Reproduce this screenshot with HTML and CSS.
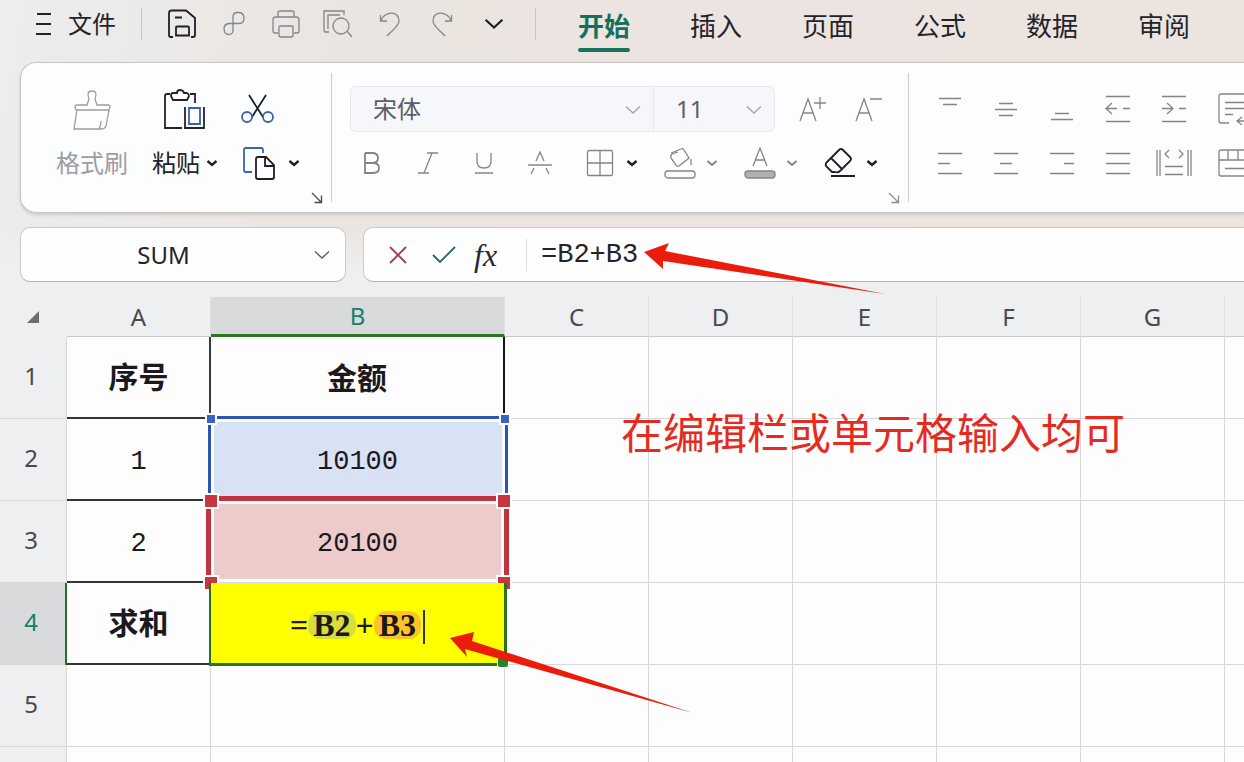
FILE: index.html
```html
<!DOCTYPE html>
<html lang="zh-CN">
<head>
<meta charset="UTF-8">
<meta name="viewport" content="width=device-width, initial-scale=1">
<title>表格求和</title>
<link rel="stylesheet" href="styles.css">
</head>
<body>

<svg class="defs" aria-hidden="true">
  <symbol id="chev" viewBox="0 0 12 8"><path d="M1.5 2 6 6 10.5 2"/></symbol>
  <symbol id="chev-wide" viewBox="0 0 16 10"><path d="M1 1.5 8 8 15 1.5"/></symbol>
  <symbol id="launcher" viewBox="0 0 12 12"><path d="M1 1 10 10M10.500 3.500V10.500H3.500"/></symbol>
</svg>

<header class="menubar">
  <button class="file-button">
    <svg width="16" height="24" viewBox="0 0 16 24"><path d="M1 2H15M0 12H15M0 22H15"/></svg>
    文件
  </button>
  <span class="bar-sep"></span>
  <div class="quick">
    <button class="tool strong" aria-label="保存">
      <svg width="28" height="30" viewBox="0 0 28 30"><path d="M5 28H3Q1 28 1 26V4Q1 1.500 3.500 1.500H18L27 9V26Q27 28 25 28H23M7 8.500H14M9 17.500H20Q21 17.500 21 18.500V26.500H8V18.500Q8 17.500 9 17.500Z"/></svg>
    </button>
    <button class="tool" aria-label="输出">
      <svg width="28" height="30" viewBox="0 0 28 30"><path d="M13 22V8Q13 3.500 17.500 3.500H19Q24 4 24 9 24 14.500 19 14.500H9Q4 15 4 20 4.500 25.500 8.500 25.500 12.500 25.500 13 22"/></svg>
    </button>
    <button class="tool" aria-label="打印">
      <svg width="28" height="30" viewBox="0 0 28 30"><path d="M6 24H3Q1 24 1 22V11Q1 8 4 8H24Q27 8 27 11V22Q27 24 25 24H22M6 8V4Q6 2 8 2H20Q22 2 22 4V8M8 17H20Q21 17 21 18V26Q21 28 19 28H9Q7 28 7 26V18Q7 17 8 17Z"/></svg>
    </button>
    <button class="tool" aria-label="打印预览">
      <svg width="30" height="30" viewBox="0 0 30 30"><path d="M6 23H2Q1 23 1 21V2H21V6M5 20V6H17M24 22 29 28"/><circle cx="18" cy="17" r="8"/></svg>
    </button>
    <button class="tool" aria-label="撤消">
      <svg width="28" height="30" viewBox="0 0 28 30"><path d="M4.500 6V12H11M4.500 12C9 2 23 1 23 12 22.500 18 16 21 11 27"/></svg>
    </button>
    <button class="tool" aria-label="恢复">
      <svg width="28" height="30" viewBox="0 0 28 30"><path d="M23.500 6V12H17M23.500 12C19 2 5 1 5 12 5.500 18 12 21 17 27"/></svg>
    </button>
    <button class="tool strong" aria-label="更多"><svg width="20" height="12"><use href="#chev-wide"/></svg></button>
  </div>
  <span class="bar-sep"></span>
  <nav class="tabs">
    <button class="tab active">开始</button>
    <button class="tab">插入</button>
    <button class="tab">页面</button>
    <button class="tab">公式</button>
    <button class="tab">数据</button>
    <button class="tab">审阅</button>
  </nav>
</header>

<section class="ribbon">
  <div class="group clipboard">
    <button class="big-tool painter">
      <svg width="40" height="44" viewBox="0 0 40 44"><path d="M15 18 17 12Q14 4 20 4T23 12L25 18H36Q38 18 38 20L37 23H4L3 20Q3 18 5 18ZM5 23 2 42H29Q33 42 34 39L37 23M27 42Q29 38 29 34"/></svg>
      <span>格式刷</span>
    </button>
    <button class="big-tool paste">
      <svg width="44" height="44" viewBox="0 0 44 44"><path d="M7 7H4Q2 7 2 9V41H19M27 7H32V16M10 6H14Q14 3 17 3T21 6H24Q26 7 26 9L24 13H10L8 9Q8 6 10 6ZM22 20V41H41V20"/><path class="blue" d="M26 21H37V37H26Z"/></svg>
      <span>粘贴 <svg class="bold-chev" width="12" height="8"><use href="#chev"/></svg></span>
    </button>
    <div class="rows">
      <div class="row">
        <button class="tool strong" aria-label="剪切">
          <svg width="34" height="32" viewBox="0 0 34 32"><path d="M8 2 22 24M25 2 11 24"/><g class="blue"><circle cx="6" cy="24" r="5"/><circle cx="27" cy="24" r="5"/></g></svg>
        </button>
      </div>
      <div class="row">
        <button class="tool strong" aria-label="复制">
          <svg width="34" height="36" viewBox="0 0 34 36"><path class="blue" d="M11 27H5Q3 27 3 25V5Q3 3 5 3H20Q22 3 22 5V8"/><path d="M17 12H25L33 20V32Q33 34 31 34H17Q15 34 15 32V14Q15 12 17 12ZM24 12V21H33"/></svg>
        </button>
        <button class="drop strong" aria-label="复制选项"><svg width="12" height="8"><use href="#chev"/></svg></button>
      </div>
    </div>
    <button class="launcher strong" aria-label="剪贴板设置"><svg width="12" height="12"><use href="#launcher"/></svg></button>
  </div>

  <div class="group font">
    <div class="row">
      <div class="combo">
        <label class="pick family"><select aria-label="字体"><option>宋体</option></select><svg width="16" height="10"><use href="#chev-wide"/></svg></label>
        <label class="pick size"><select aria-label="字号"><option>11</option></select><svg width="16" height="10"><use href="#chev-wide"/></svg></label>
      </div>
      <button class="tool" aria-label="增大字号"><svg width="32" height="28" viewBox="0 0 32 28"><path d="M3 26 11 4 19 26M6 18H16M17 8H29M23 2V14"/></svg></button>
      <button class="tool" aria-label="减小字号"><svg width="32" height="28" viewBox="0 0 32 28"><path d="M3 26 11 4 19 26M6 18H16M17 4H29"/></svg></button>
    </div>
    <div class="row styles">
      <button class="tool" aria-label="加粗"><svg class="thick" width="20" height="24" viewBox="0 0 20 24"><path d="M3 2H10Q16 2 16 7T10 12H3M3 2V22H11Q17 22 17 17T11 12"/></svg></button>
      <button class="tool" aria-label="倾斜"><svg width="22" height="24" viewBox="0 0 22 24"><path d="M10 2H21M1 22H12M15 2 7 22"/></svg></button>
      <button class="tool" aria-label="下划线"><svg width="20" height="24" viewBox="0 0 20 24"><path d="M3 2V10Q3 17 10 17T17 10V2M1 22H19"/></svg></button>
      <button class="tool" aria-label="删除线"><svg width="26" height="24" viewBox="0 0 26 24"><path d="M9 10 13 1 17 10M1 14H25M7 17 4 23M19 17 22 23"/></svg></button>
      <div class="pairs">
        <div class="pair">
          <button class="tool" aria-label="边框"><svg width="28" height="28" viewBox="0 0 28 28"><path d="M3 1.500H25Q26.500 1.500 26.500 3V25Q26.500 26.500 25 26.500H3Q1.500 26.500 1.500 25V3Q1.500 1.500 3 1.500ZM14 2V26M2 14H26"/></svg></button>
          <button class="drop strong" aria-label="边框选项"><svg width="12" height="8"><use href="#chev"/></svg></button>
        </div>
        <div class="pair">
          <button class="tool" aria-label="填充颜色"><svg width="32" height="34" viewBox="0 0 32 34"><path d="M7 7 17 3Q19 2 20 4L25 12 15 20Q13 21 12 19L7 12Q6 10 8 8L14 6M27 13V19"/><rect x="1" y="25" width="30" height="7" rx="3"/></svg></button>
          <button class="drop" aria-label="填充选项"><svg width="12" height="8"><use href="#chev"/></svg></button>
        </div>
        <div class="pair">
          <button class="tool" aria-label="字体颜色"><svg width="32" height="34" viewBox="0 0 32 34"><path d="M9 20 16 2 23 20M11 14H21"/><rect class="swatch" x="1" y="25" width="30" height="7" rx="3"/></svg></button>
          <button class="drop" aria-label="字体颜色选项"><svg width="12" height="8"><use href="#chev"/></svg></button>
        </div>
        <div class="pair">
          <button class="tool strong" aria-label="清除"><svg width="32" height="32" viewBox="0 0 32 32"><path d="M3 15 15 3Q17 1 19 3L26 10Q28 12 26 14L16 24Q14 26 11 25H8L2 19Q1 17 3 15ZM7 11 18 22M7 29H31"/></svg></button>
          <button class="drop strong" aria-label="清除选项"><svg width="12" height="8"><use href="#chev"/></svg></button>
        </div>
      </div>
    </div>
    <button class="launcher" aria-label="字体设置"><svg width="12" height="12"><use href="#launcher"/></svg></button>
  </div>

  <div class="group align">
    <div class="row">
      <button class="tool" aria-label="顶端对齐"><svg width="24" height="28" viewBox="0 0 24 28"><path d="M1 3.500H23M5 9.500H19"/></svg></button>
      <button class="tool" aria-label="垂直居中"><svg width="24" height="28" viewBox="0 0 24 28"><path d="M5 8.500H19M1 14.500H23M5 20.500H19"/></svg></button>
      <button class="tool" aria-label="底端对齐"><svg width="24" height="28" viewBox="0 0 24 28"><path d="M5 18.500H19M1 24.500H23"/></svg></button>
      <button class="tool" aria-label="减少缩进"><svg width="26" height="28" viewBox="0 0 26 28"><path d="M1 1.500H25M1 26.500H25M7 8 1 13.500 7 19M1 13.500H12M18 13.500H25"/></svg></button>
      <button class="tool" aria-label="增加缩进"><svg width="26" height="28" viewBox="0 0 26 28"><path d="M1 1.500H25M1 26.500H25M6 8 12 13.500 6 19M1 13.500H12M18 13.500H25"/></svg></button>
      <button class="tool" aria-label="自动换行"><svg width="32" height="32" viewBox="0 0 32 32"><path d="M15 30H7Q5 30 5 28V3Q5 1 7 1H32M11 9.500H32M11 15.500H32M11 21.500H19M28 24 23 28 28 32M23 28H32"/></svg></button>
    </div>
    <div class="row">
      <button class="tool" aria-label="左对齐"><svg width="26" height="24" viewBox="0 0 26 24"><path d="M1 2.500H25M1 12.500H13M1 22.500H25"/></svg></button>
      <button class="tool" aria-label="居中"><svg width="26" height="24" viewBox="0 0 26 24"><path d="M1 2.500H25M7 12.500H19M1 22.500H25"/></svg></button>
      <button class="tool" aria-label="右对齐"><svg width="26" height="24" viewBox="0 0 26 24"><path d="M1 2.500H25M15 12.500H25M1 22.500H25"/></svg></button>
      <button class="tool" aria-label="两端对齐"><svg width="26" height="24" viewBox="0 0 26 24"><path d="M1 2.500H25M1 12.500H25M1 22.500H25"/></svg></button>
      <button class="tool" aria-label="分散对齐"><svg width="36" height="28" viewBox="0 0 36 28"><path d="M1 1V27M4 1V27M32 1V27M35 1V27M13 1 9 5 13 9M23 1 27 5 23 9M9 17.500H27M9 25.500H27"/></svg></button>
      <button class="tool" aria-label="合并居中"><svg width="32" height="30" viewBox="0 0 32 30"><path d="M32 28H7Q5 28 5 26V4Q5 2 7 2H32M5 12H32M14 2V12M24 2V12M11 20.500H32"/></svg></button>
    </div>
  </div>
</section>

<section class="formula-row">
  <div class="name-box">
    <input type="text" value="SUM" aria-label="名称框">
    <button class="tool" aria-label="名称列表"><svg width="16" height="10"><use href="#chev-wide"/></svg></button>
  </div>
  <div class="formula-bar">
    <button class="tool cancel" aria-label="取消"><svg width="20" height="20" viewBox="0 0 20 20"><path d="M2 2 18 18M18 2 2 18"/></svg></button>
    <button class="tool accept" aria-label="输入"><svg width="24" height="20" viewBox="0 0 24 20"><path d="M1 10 8 17 23 2"/></svg></button>
    <button class="tool fx" aria-label="插入函数"><i>fx</i></button>
    <span class="bar-sep"></span>
    <input type="text" value="=B2+B3" aria-label="编辑栏">
  </div>
</section>

<main class="sheet">
  <table>
    <colgroup>
      <col class="col-head"><col><col class="col-b"><col><col><col><col><col><col>
    </colgroup>
    <thead>
      <tr>
        <th><svg width="14" height="14" viewBox="0 0 14 14"><path class="corner" d="M13 1V13H1Z"/></svg></th>
        <th>A</th><th class="current">B</th><th>C</th><th>D</th><th>E</th><th>F</th><th>G</th><th></th>
      </tr>
    </thead>
    <tbody>
      <tr><th>1</th><td class="ruled title">序号</td><td class="title top-edge">金额</td><td></td><td></td><td></td><td></td><td></td><td></td></tr>
      <tr>
        <th>2</th><td class="ruled">1</td>
        <td class="marked">10100<span class="range blue-range"><i></i><i></i></span></td>
        <td></td><td></td><td></td><td></td><td></td><td></td>
      </tr>
      <tr>
        <th>3</th><td class="ruled">2</td>
        <td class="marked">20100<span class="range red-range"><i></i><i></i><i></i><i></i></span></td>
        <td></td><td></td><td></td><td></td><td></td><td></td>
      </tr>
      <tr>
        <th class="current">4</th><td class="ruled title total">求和</td>
        <td class="marked editing">=<mark>B2</mark>+<mark class="second">B3</mark><span class="caret"></span><span class="fill-area"></span></td>
        <td></td><td></td><td></td><td></td><td></td><td></td>
      </tr>
      <tr><th>5</th><td></td><td></td><td></td><td></td><td></td><td></td><td></td><td></td></tr>
      <tr><th></th><td></td><td></td><td></td><td></td><td></td><td></td><td></td><td></td></tr>
    </tbody>
  </table>
  <p class="note">在编辑栏或单元格输入均可</p>
  <svg class="arrow to-bar" width="242" height="52" viewBox="0 0 242 52"><path d="M0 9 25 0 21 8 241 51 19 18 19 26Z"/></svg>
  <svg class="arrow to-cell" width="244" height="82" viewBox="0 0 244 82"><path d="M0 6 24 0 22 9 243 81 15 17 17 25Z"/></svg>
</main>

</body>
</html>
```
FILE: styles.css
```css
* {box-sizing: border-box;}
html, body {margin: 0; height: 100%; overflow: hidden;}
body {
  display: flex; flex-direction: column;
  font: 24px/1 "Noto Sans", "Noto Sans CJK SC", sans-serif; color: #25232a;
  background: linear-gradient(100deg, #ecedef 0, #ebe5e1 340px, #ebe4df 100%);
}
button, input, select {
  font: inherit; color: inherit; margin: 0; padding: 0; border: 0; background: none;
}
button {cursor: pointer;}
svg {fill: none; stroke: currentColor; stroke-width: 1.3; display: block; flex: none;}
.defs {position: absolute; width: 0; height: 0;}
.blue {stroke: #3c62ac;}

/* menu bar */
.menubar {display: flex; align-items: center; height: 62px; flex: none; padding: 0 0 14px 36px;}
.file-button {display: flex; align-items: center; gap: 16px; white-space: nowrap;}
.file-button svg {stroke-width: 2;}
.bar-sep {width: 1px; height: 32px; background: #c9c5c4; flex: none;}
.file-button + .bar-sep {margin: 0 26px 0 25px;}
.quick {display: flex; gap: 24px; margin-right: 27px;}
.quick .tool {width: 28px; height: 32px;}
.tabs {display: flex; gap: 60px; margin-left: 42px; font-size: 26px;}
.tab {position: relative; height: 48px; padding-top: 4px; white-space: nowrap;}
.tab.active {color: #13705a; font-weight: bold;}
.tab.active::after {
  content: ""; position: absolute; left: 0; right: 0; bottom: -4px;
  height: 4px; border-radius: 2px; background: #17735a;
}

.tool, .drop {
  display: flex; align-items: center; justify-content: center;
  width: 32px; height: 46px; flex: none; color: #84848a;
}
.strong {color: #1f1e27;}
.strong svg {stroke-width: 1.8;}
.drop svg, .bold-chev {stroke-width: 2;}
.drop.strong svg {stroke-width: 2.4;}

/* ribbon */
.ribbon {
  display: flex; flex: none; height: 151px; margin-left: 20px; overflow: hidden;
  background: #fcfdfe; border: 1px solid #c9c5c3; border-right: 0;
  border-radius: 16px 0 0 16px; box-shadow: 0 2px 3px #cfcac8;
}
.group {
  position: relative; flex: none; display: flex; flex-direction: column; gap: 8px;
  margin: 10px 0; padding-top: 13px; border-right: 1px solid #cbccd0;
}
.clipboard {flex-direction: row; gap: 24px; padding-left: 35px; padding-right: 21px;}
.font {padding-left: 18px; padding-right: 20px;}
.align {border: 0; padding-left: 25px;}
.row, .pair {display: flex;}
.rows {display: flex; flex-direction: column; gap: 8px;}
.clipboard .row {gap: 4px;}
.big-tool {
  display: grid; grid-template-rows: 46px 46px; row-gap: 8px;
  place-items: center; align-content: start; white-space: nowrap;
}
.painter {width: 72px; color: #9c9ca2;}
.paste svg {stroke-width: 1.8;}
.paste span {display: flex; align-items: center; gap: 6px;}
.paste .bold-chev {stroke-width: 2.4;}
.launcher {position: absolute; right: 8px; bottom: -2px; color: #8d8d94;}
.launcher.strong {color: #4a4850;}
.launcher svg {stroke-width: 1.3;}

.combo {
  display: flex; width: 425px; height: 46px; margin-right: 22px;
  background: #f6f7fa; border: 1px solid #e6e8ec; border-radius: 6px;
}
.pick {position: relative; color: #5f5d66;}
.pick.family {flex: 1; border-right: 1px solid #e6e8ec;}
.pick.size {width: 120px;}
.pick select {appearance: none; width: 100%; height: 100%; padding-left: 22px; outline: 0;}
.pick svg {position: absolute; right: 12px; top: 18px; color: #a5a6ac; pointer-events: none;}
.font .row > .tool + .tool {margin-left: 24px;}
.styles {padding-left: 6px;}
.thick {stroke-width: 1.8;}
.pairs {display: flex; gap: 16px; margin-left: 28px;}
.swatch {fill: #b0b0b3;}
.align .row {gap: 24px;}

/* name box and formula bar */
.formula-row {display: flex; gap: 17px; flex: none; height: 84px; padding: 14px 0 15px 20px;
  background: linear-gradient(transparent 14px, #eeeff1 60px);}
.name-box, .formula-bar {
  display: flex; align-items: center; background: #fefefe;
  border: 1px solid #c9cacc; border-bottom-color: #b2b3b6; border-radius: 10px;
}
.name-box {width: 326px; padding-right: 7px;}
.name-box input {flex: 1; min-width: 0; text-align: center;}
.name-box .tool {color: #55545b;}
.formula-bar {flex: 1; border-right: 0; border-radius: 10px 0 0 10px; padding-left: 18px; gap: 14px;}
.formula-bar input {
  flex: 1; min-width: 0; height: 40px; outline: 0;
  font-family: "Liberation Mono", monospace; font-size: 27px;
}
.formula-bar svg {stroke-width: 1.8;}
.formula-bar .bar-sep {margin-left: 6px; background: #dcdde0;}
.cancel {color: #a53a50;}
.accept {color: #1e6c66;}
.formula-bar .fx {
  justify-content: flex-start; color: #2a2730;
  font-family: "Liberation Serif", serif; font-size: 32px;
}

/* sheet */
.sheet {position: relative; flex: 1; min-height: 0; background: #fdfdfe;}
table {table-layout: fixed; width: 1369px; border-collapse: separate; border-spacing: 0;}
col {width: 144px;}
.col-head {width: 67px;}
.col-b {width: 294px;}
th, td {
  height: 82px; padding: 0; text-align: center; vertical-align: middle;
  border: 0 solid #d6d8db; border-right-width: 1px; border-bottom-width: 1px;
}
th {background: #eeeff1; font-weight: normal; color: #49474f;}
thead th {height: 40px; border-bottom-color: #c9cbce; border-right-color: #dfe0e2;}
thead th:first-child {border-color: transparent;}
th.current {background: #d9dadc; color: #15806b;}
thead .current {border-bottom: 3px solid #2d7524;}
tbody th {padding: 0 4px 4px 0;}
th svg {margin: 0 0 0 26px;}
.corner {fill: #6d6c72; stroke: none;}
td {
  padding-top: 6px; font-size: 27px; color: #1c191d;
  font-family: "Liberation Mono", "Noto Sans CJK SC", monospace;
}
.title {font-size: 30px; font-weight: bold;}
.ruled {border-bottom: 2px solid #343137;}
.top-edge {border-right: 2px solid #161616; box-shadow: -2px 0 0 #3b3739;}
.total {box-shadow: -2px 0 0 #28702a;}
.marked {position: relative; isolation: isolate;}
.range {
  position: absolute; z-index: -1; top: -3px; right: -4px; bottom: 0; left: -3px;
  border: 3px solid #2c55b0; border-bottom: 0; background: #d9e1f5;
  box-shadow: inset 0 0 0 3px #fbfcfe;
}
.range i {
  position: absolute; top: -6px; left: -6px; width: 12px; height: 12px;
  background: #3a62c5; border: 2px solid #fff;
}
.range i:nth-child(even) {left: auto; right: -6px;}
.red-range {
  top: -5px; right: -5px; left: -5px; border-width: 5px; border-color: #bf353f;
  background: #eecbcb;
}
.red-range i {top: -8px; left: -8px; width: 16px; height: 16px; background: #c93640;}
.red-range i:nth-child(even) {right: -8px;}
.red-range i:nth-child(n+3) {top: auto; bottom: -9px;}
.editing {font-family: "Liberation Serif", serif; font-size: 32px; font-weight: bold;}
.editing mark {
  display: inline-block; padding: 0 5px; line-height: 28px;
  color: inherit; background: #d5de3c; border-radius: 12px;
}
.editing mark.second {background: #fcc428;}
.caret {display: inline-block; width: 2px; height: 34px; margin-left: 2px; vertical-align: -8px; background: #333;}
.fill-area {
  position: absolute; z-index: -1; top: 0; right: -3px; bottom: -2px; left: -2px;
  background: #ff0; border: 3px solid #26741d; border-top: 0; border-left-width: 2px;
}
.fill-area::after {
  content: ""; position: absolute; right: -5px; bottom: -5px; width: 10px; height: 10px;
  background: #26832b; border: 1px solid #fff; border-radius: 3px;
}

/* notes over the sheet */
.note {
  position: absolute; left: 621px; top: 113px; margin: 0; font-size: 42px; white-space: nowrap;
  font-family: "Noto Sans CJK SC", sans-serif; color: #e52b20;
}
.arrow {position: absolute; fill: #eb1c0c; stroke: none; pointer-events: none;}
.to-bar {left: 644px; top: -54px;}
.to-cell {left: 450px; top: 335px;}
```
